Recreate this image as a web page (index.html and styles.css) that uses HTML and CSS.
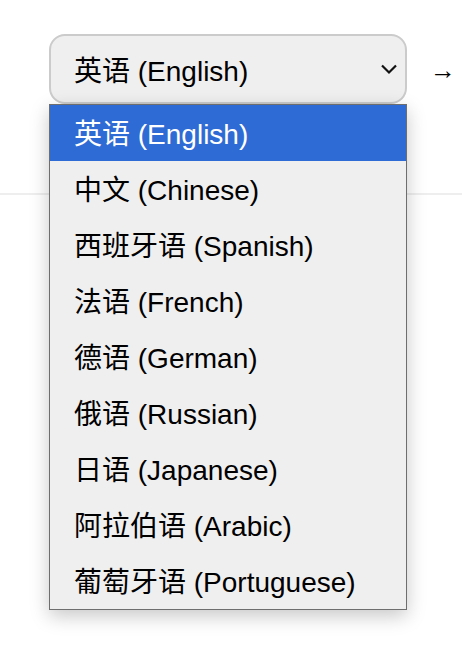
FILE: index.html
```html
<!DOCTYPE html>
<html>

<head>
	<link rel="stylesheet" href="styles.css">
</head>

<body>
	<div class="page">
		<div class="row">
			<div class="picker">
				<div class="select">
					<span>英语 (English)</span>
					<svg class="chevron" width="18" height="12" viewBox="0 0 18 12">
						<path d="M2 2.5 L9 9.5 L16 2.5" fill="none" stroke="#111" stroke-width="2.2" />
					</svg>
				</div>
				<ul class="options">
					<li class="selected">英语 (English)</li>
					<li>中文 (Chinese)</li>
					<li>西班牙语 (Spanish)</li>
					<li>法语 (French)</li>
					<li>德语 (German)</li>
					<li>俄语 (Russian)</li>
					<li>日语 (Japanese)</li>
					<li>阿拉伯语 (Arabic)</li>
					<li>葡萄牙语 (Portuguese)</li>
				</ul>
			</div>
			<span class="arrow">→</span>
		</div>
		<div class="divider"></div>
	</div>
</body>

</html>
```

FILE: styles.css
```css
body {
	font-family: 'Liberation Sans', 'Noto Sans CJK SC', sans-serif;
	background-color: white;
	color: black;
	margin: 0;
	padding: 0;
}

.page {
	padding-top: 34px;
	min-height: 655px;
	box-sizing: border-box;
}

.row {
	display: flex;
	align-items: center;
	padding-left: 49px;
	gap: 23px;
	position: relative;
	z-index: 2;
}

.picker {
	position: relative;
	flex-shrink: 0;
}

.select {
	box-sizing: border-box;
	width: 358px;
	height: 70px;
	border: 2px solid #cbcbcb;
	border-radius: 16px;
	background-color: #efefef;
	display: flex;
	align-items: center;
	justify-content: space-between;
	padding: 0 7px 0 23px;
	font-size: 28px;
}

.chevron {
	flex-shrink: 0;
}

.options {
	position: absolute;
	top: 70px;
	left: 0;
	box-sizing: border-box;
	width: 358px;
	margin: 0;
	padding: 0;
	list-style: none;
	background-color: #efefef;
	border: 1px solid #6e6e6e;
	box-shadow: 0 6px 18px rgba(0, 0, 0, 0.22);
}

.options li {
	box-sizing: border-box;
	height: 56px;
	line-height: 56px;
	padding: 2px 0 0 24px;
	font-size: 28px;
}

.options .selected {
	background-color: #2f6bd4;
	color: white;
}

.arrow {
	font-family: 'Liberation Sans', sans-serif;
	font-size: 26px;
	padding-top: 3px;
}

.divider {
	margin-top: 89px;
	height: 2px;
	background-color: #eeeeee;
}
```
